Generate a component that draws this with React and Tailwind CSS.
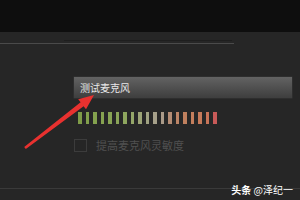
import React from 'react';

const bars = [
  '#7f9c48', '#82a04c', '#84a24e', '#86a250', '#88a454', '#8aa458', '#8ea65e', '#94a668',
  '#9ca476', '#a0a282', '#a6a08a', '#aa9a88', '#b48c74', '#bc8466', '#c0805e', '#c47e5c',
  '#c67a5a', '#c87458', '#c85a58',
];

const App = () => {
  return (
    <div className="w-[300px] h-[200px] bg-[#262626] relative overflow-hidden" style={{ fontFamily: '"Noto Sans CJK SC", "Noto Sans", sans-serif' }}>
      {/* top band */}
      <div className="h-[32px] bg-[#0e0e0e]" />

      {/* header rules */}
      <div className="h-[9px] flex items-end">
        <div className="ml-[64px] w-[168px] h-px bg-[#1e1e1e]" />
      </div>
      <div className="mt-[2px] w-[234px] h-px bg-[#4a4a4a]" />

      {/* test mic button */}
      <div className="mt-[32px] ml-[73px] w-[220px] h-[23px] rounded-[1px] border border-[#2e2e2e] bg-gradient-to-b from-[#636363] to-[#3e3e3e] flex items-center pl-[6px]">
        <span className="text-[10px] leading-none text-[#e8e8e8]">测试麦克风</span>
      </div>

      {/* level meter */}
      <div className="mt-[13px] ml-[78px] flex gap-[4px]">
        {bars.map((c, i) => (
          <div key={i} className="w-[3.5px] h-[12px]" style={{ backgroundColor: c }} />
        ))}
      </div>

      {/* checkbox row */}
      <div className="mt-[15px] ml-[74px] flex items-center gap-[9px]">
        <div className="w-[13px] h-[13px] border border-[#3c3c3c]" />
        <span className="text-[11px] leading-none text-[#505050]">提高麦克风灵敏度</span>
      </div>

      {/* bottom rule */}
      <div className="mt-[36px] w-full h-px bg-[#3a3a3a]" />

      {/* watermark */}
      <div className="absolute right-[7px] bottom-[5px] text-[10px] leading-none text-white font-bold">
        头条 <span className="font-normal">@泽纪一</span>
      </div>

      {/* red arrow */}
      <svg className="absolute left-0 top-0" width="300" height="200" viewBox="0 0 300 200">
        <polygon
          points="24.2,147 80.6,102.2 78.2,99.2 94,95 86,109.2 83.6,106.2 25.8,149"
          fill="#e8312f"
        />
      </svg>
    </div>
  );
};

export default App;
